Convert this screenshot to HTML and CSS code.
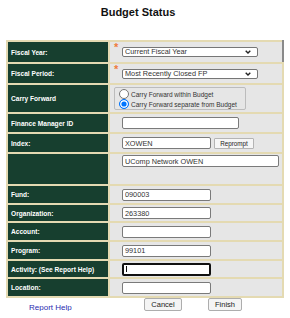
FILE: index.html
```html
<!DOCTYPE html>
<html lang="en">
<head>
    <meta charset="UTF-8">
    <meta name="viewport" content="width=device-width, initial-scale=1.0">
    <title>Budget Status</title>
    <link rel="stylesheet" href="styles.css">
</head>
<body>
    <div class="page">
        <h1 class="title">Budget Status</h1>

        <table class="form-table">
            <colgroup>
                <col class="col-label">
                <col>
            </colgroup>
            <tr class="r22">
                <td class="label">Fiscal Year:</td>
                <td class="value first">
                    <span class="req">*</span><span class="select-wrap"><select class="select"><option>Current Fiscal Year</option></select><svg class="chevron" width="6" height="4" viewBox="0 0 6 4"><polyline points="0.7,0.7 3,3 5.3,0.7" fill="none" stroke="#222" stroke-width="1.4"/></svg></span>
                </td>
            </tr>
            <tr class="r21">
                <td class="label">Fiscal Period:</td>
                <td class="value">
                    <span class="req">*</span><span class="select-wrap"><select class="select"><option>Most Recently Closed FP</option></select><svg class="chevron" width="6" height="4" viewBox="0 0 6 4"><polyline points="0.7,0.7 3,3 5.3,0.7" fill="none" stroke="#222" stroke-width="1.4"/></svg></span>
                </td>
            </tr>
            <tr class="r29">
                <td class="label">Carry Forward</td>
                <td class="value">
                    <div class="radio-box">
                        <label class="radio-row"><input type="radio" name="cf" class="radio">Carry Forward within Budget</label>
                        <label class="radio-row"><input type="radio" name="cf" class="radio" checked>Carry Forward separate from Budget</label>
                    </div>
                </td>
            </tr>
            <tr class="r20">
                <td class="label">Finance Manager ID</td>
                <td class="value"><input type="text" class="text-input wide"></td>
            </tr>
            <tr class="r20">
                <td class="label">Index:</td>
                <td class="value"><input type="text" class="text-input" value="XOWEN"><button class="reprompt">Reprompt</button></td>
            </tr>
            <tr class="r32">
                <td class="label"></td>
                <td class="value top"><input type="text" class="text-input full" value="UComp Network OWEN"></td>
            </tr>
            <tr class="r19">
                <td class="label">Fund:</td>
                <td class="value"><input type="text" class="text-input" value="090003"></td>
            </tr>
            <tr class="r18">
                <td class="label">Organization:</td>
                <td class="value"><input type="text" class="text-input" value="263380"></td>
            </tr>
            <tr class="r19">
                <td class="label">Account:</td>
                <td class="value"><input type="text" class="text-input"></td>
            </tr>
            <tr class="r19">
                <td class="label">Program:</td>
                <td class="value"><input type="text" class="text-input" value="99101"></td>
            </tr>
            <tr class="r18">
                <td class="label">Activity: (See Report Help)</td>
                <td class="value"><input type="text" class="text-input focused"></td>
            </tr>
            <tr class="r19">
                <td class="label">Location:</td>
                <td class="value"><input type="text" class="text-input"></td>
            </tr>
        </table>

        <div class="actions">
            <div class="actions-left"><a href="#" class="help-link">Report Help</a></div>
            <button class="btn cancel">Cancel</button>
            <button class="btn finish">Finish</button>
        </div>
    </div>
</body>
</html>
```

FILE: styles.css
```css
body {
    margin: 0;
    background-color: #ffffff;
    font-family: "Liberation Sans", Arial, sans-serif;
    color: #222;
}
.page {
    width: 278px;
    margin-left: 6px;
}
.title {
    font-size: 11px;
    line-height: 13px;
    font-weight: bold;
    text-align: center;
    margin: 6px 0 21px;
    padding-right: 14px;
    color: #111;
}
.form-table {
    width: 278px;
    table-layout: fixed;
    border-collapse: collapse;
}
.col-label {
    width: 102px;
}
.form-table td {
    border: 2px solid #e4dab2;
    padding: 0;
    vertical-align: middle;
}
.r18 { height: 18px; }
.r19 { height: 19px; }
.r20 { height: 20px; }
.r21 { height: 21px; }
.r22 { height: 22px; }
.r29 { height: 29px; }
.r32 { height: 32px; }
.label {
    background-color: #173f2f;
    color: #ffffff;
    font-size: 6.6px;
    font-weight: bold;
    padding-left: 3px !important;
    white-space: nowrap;
}
.value {
    background-color: #e6e6e6;
    padding-left: 4px !important;
    font-size: 0;
    white-space: nowrap;
}
.value.first {
    border-right-color: #8a8a8a !important;
}
.value.top {
    vertical-align: top !important;
    padding-top: 1px !important;
}
.req {
    display: inline-block;
    width: 8px;
    height: 8px;
    margin-top: -4px;
    font-size: 11px;
    font-weight: bold;
    line-height: 8px;
    color: #ef7b3a;
    vertical-align: top;
}
.select-wrap {
    position: relative;
    display: inline-block;
    vertical-align: middle;
}
.select {
    appearance: none;
    -webkit-appearance: none;
    box-sizing: border-box;
    width: 136px;
    height: 10px;
    margin: 0;
    padding: 0 0 0 2px;
    border: 1px solid #767676;
    border-radius: 2px;
    background-color: #ffffff;
    font-family: "Liberation Sans", Arial, sans-serif;
    font-size: 7.3px;
    line-height: 8px;
    color: #333;
}
.chevron {
    position: absolute;
    right: 7px;
    top: 3px;
}
.radio-box {
    box-sizing: border-box;
    width: 132px;
    height: 23px;
    padding: 1px 0 0 4px;
    border: 1px solid #bcbcbc;
    border-radius: 2px;
}
.radio-row {
    display: flex;
    align-items: center;
    gap: 2px;
    height: 10px;
    font-size: 6.5px;
    color: #333;
}
.radio {
    appearance: none;
    -webkit-appearance: none;
    box-sizing: border-box;
    width: 10px;
    height: 10px;
    margin: 0;
    border: 1px solid #767676;
    border-radius: 50%;
    background-color: #ffffff;
}
.radio:checked {
    border-color: #0075ff;
    background-color: #0075ff;
    box-shadow: inset 0 0 0 1.4px #ffffff;
}
.text-input {
    box-sizing: border-box;
    width: 89px;
    height: 12px;
    margin: 0 0 0 8px;
    padding: 0 2px;
    border: 1px solid #7a7a7a;
    border-radius: 2px;
    background-color: #ffffff;
    font-family: "Liberation Sans", Arial, sans-serif;
    font-size: 7.3px;
    color: #333;
    vertical-align: middle;
    outline: none;
}
.text-input.wide {
    width: 117px;
}
.text-input.full {
    width: 157px;
}
.text-input.focused {
    height: 13px;
    border: 2px solid #111;
    background: linear-gradient(#111, #111) no-repeat 2px 1.5px / 1px 6px, #ffffff;
}
.reprompt {
    box-sizing: border-box;
    width: 40px;
    height: 11px;
    margin: 0 0 0 3px;
    padding: 0;
    border: 1px solid #b4b4b4;
    border-radius: 1px;
    background-color: #f6f6f6;
    font-family: "Liberation Sans", Arial, sans-serif;
    font-size: 6.3px;
    color: #222;
    vertical-align: middle;
}
.actions {
    display: flex;
    align-items: center;
    height: 13px;
    margin-top: 0;
}
.actions-left {
    width: 102px;
    padding-left: 23px;
    box-sizing: border-box;
}
.help-link {
    font-size: 8px;
    color: #2b2bb0;
    text-decoration: underline;
}
.btn {
    box-sizing: border-box;
    height: 13px;
    padding: 0;
    border: 1px solid #adadad;
    border-radius: 2px;
    background-color: #f4f4f4;
    font-family: "Liberation Sans", Arial, sans-serif;
    font-size: 7.5px;
    color: #222;
}
.cancel {
    width: 38px;
    margin-left: 36px;
}
.finish {
    width: 34px;
    margin-left: 26px;
}
```
